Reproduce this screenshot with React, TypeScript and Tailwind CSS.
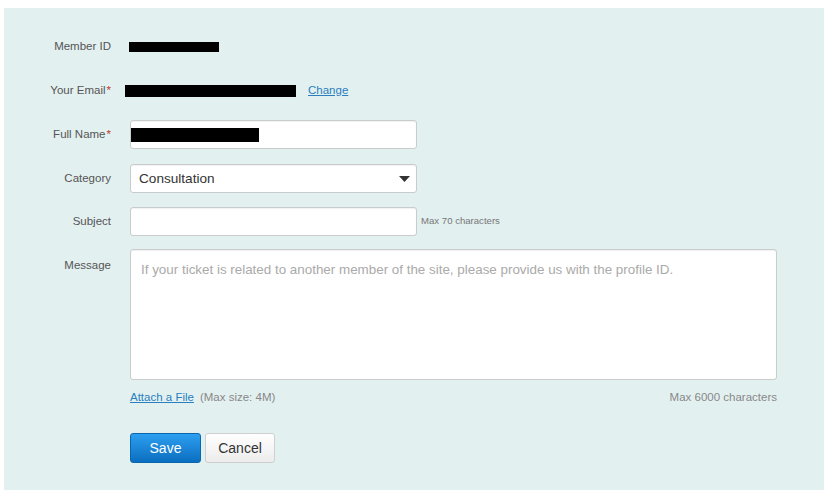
export default function App() {
  const label = "w-[108px] shrink-0 pr-px text-right text-[11.5px] text-[#555]";
  const input =
    "h-[29px] w-[287px] rounded-[3px] border border-[#c9cccc] bg-white shadow-[inset_0_1px_1px_rgba(0,0,0,0.06)]";

  return (
    <div className="h-[497px] w-[830px] bg-white pl-1 pt-2" style={{ fontFamily: '"Liberation Sans", Arial, sans-serif' }}>
      <div className="h-[482px] w-[820px] bg-[#e3f0f0] pt-6">
        {/* Member ID */}
        <div className="flex h-[29px] items-center">
          <div className={label}>Member ID</div>
          <div className="ml-[17px] h-[10px] w-[90px] bg-black" />
        </div>

        {/* Email */}
        <div className="mt-[15px] flex h-[29px] items-center">
          <div className={label}>
            Your Email<span className="ml-px text-[#c0392b]">*</span>
          </div>
          <div className="ml-[13px] h-[12px] w-[171px] bg-black" />
          <a href="#" className="ml-3 text-[11.5px] text-[#2a7fbf] underline">
            Change
          </a>
        </div>

        {/* Full name */}
        <div className="mt-[15px] flex h-[29px] items-center">
          <div className={label}>
            Full Name<span className="ml-px text-[#c0392b]">*</span>
          </div>
          <div className={`ml-[18px] flex items-center ${input}`}>
            <div className="h-[14px] w-[128px] bg-black" />
          </div>
        </div>

        {/* Category */}
        <div className="mt-[15px] flex h-[29px] items-center">
          <div className={label}>Category</div>
          <div className={`ml-[18px] flex items-center justify-between pl-2 pr-[6px] pt-px ${input}`}>
            <span className="text-[13.6px] text-[#333]">Consultation</span>
            <svg width="11" height="6" viewBox="0 0 11 6">
              <path d="M0 0h11L5.5 6z" fill="#333" />
            </svg>
          </div>
        </div>

        {/* Subject */}
        <div className="mt-[14px] flex h-[29px] items-center">
          <div className={label}>Subject</div>
          <div className={`ml-[18px] ${input}`} />
          <span className="ml-1 text-[9.6px] text-[#777]">Max 70 characters</span>
        </div>

        {/* Message */}
        <div className="mt-[13px] flex">
          <div className={`${label} pt-[8px]`}>Message</div>
          <div className="ml-[18px] w-[647px]">
            <div className="h-[131px] rounded-[3px] border border-[#c9cccc] bg-white px-[10px] pt-[10px] text-[13.4px] text-[#aaa] shadow-[inset_0_1px_1px_rgba(0,0,0,0.06)]">
              If your ticket is related to another member of the site, please provide us with the profile ID.
            </div>
            <div className="mt-[9px] flex items-center justify-between text-[11.5px] text-[#888]">
              <div>
                <a href="#" className="text-[#2a7fbf] underline">
                  Attach a File
                </a>
                <span className="ml-[6px]">(Max size: 4M)</span>
              </div>
              <span>Max 6000 characters</span>
            </div>

            <div className="mt-[27px] flex gap-1">
              <button className="h-[30px] w-[71px] rounded-[3px] border border-[#0b67ad] bg-gradient-to-b from-[#2d9ff0] to-[#0a6ec0] text-[14px] text-white">
                Save
              </button>
              <button className="h-[30px] w-[70px] rounded-[3px] border border-[#cfcfcf] bg-gradient-to-b from-white to-[#ececec] text-[14px] text-[#333]">
                Cancel
              </button>
            </div>
          </div>
        </div>
      </div>
    </div>
  );
}
